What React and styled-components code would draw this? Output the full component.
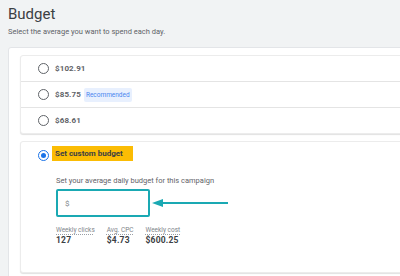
import React from "react";
import styled, { createGlobalStyle } from "styled-components";

const Global = createGlobalStyle`
  html, body { margin: 0; padding: 0; overflow: hidden; background: #f1f3f4; }
  body { font-family: Roboto, "Liberation Sans", Arial, sans-serif; }
  * { box-sizing: border-box; }
`;

const Page = styled.div`
  padding-left: 8px;
  width: 460px;
`;

const Title = styled.h1`
  margin: 0;
  padding-top: 4px;
  font-size: 15px;
  line-height: 20px;
  font-weight: 400;
  color: #3c4043;
`;

const Subtitle = styled.p`
  margin: 3px 0 0;
  font-size: 7.5px;
  line-height: 10px;
  color: #5f6368;
`;

const OuterCard = styled.section`
  margin-top: 10px;
  background: #fff;
  border: 1px solid #e3e5e8;
  border-radius: 3px;
  padding: 7px 0 24px 11px;
  display: flex;
  flex-direction: column;
  gap: 7px;
`;

const Card = styled.div`
  background: #fff;
  border: 1px solid #ececec;
  border-radius: 3px;
  box-shadow: 0 1px 1px rgba(0, 0, 0, 0.12);
`;

const OptionRow = styled.label`
  display: flex;
  align-items: center;
  height: ${(p) => (p.$first ? 25 : 26)}px;
  padding-left: 17px;
  gap: 6px;
  border-top: ${(p) => (p.$first ? "none" : "1px solid #e4e4e4")};
`;

const Radio = styled.span`
  width: 11px;
  height: 11px;
  border-radius: 50%;
  flex: none;
  border: 1.5px solid ${(p) => (p.$checked ? "#1a73e8" : "#5f6368")};
  display: flex;
  align-items: center;
  justify-content: center;
  margin-top: ${(p) => p.$offset || 0}px;
  &::after {
    content: "";
    width: 5px;
    height: 5px;
    border-radius: 50%;
    background: ${(p) => (p.$checked ? "#1a73e8" : "transparent")};
  }
`;

const Price = styled.span`
  font-size: 8px;
  font-weight: 700;
  color: #5f6368;
  letter-spacing: 0.1px;
`;

const Badge = styled.span`
  margin-left: -3px;
  background: #e8f0fe;
  color: #4a86f0;
  font-size: 6.5px;
  line-height: 14px;
  padding: 0 2px;
  border-radius: 2px;
`;

const CustomCard = styled(Card)`
  padding: 4px 0 27px 17px;
`;

const CustomHead = styled.div`
  display: flex;
  align-items: center;
  gap: 3px;
`;

const Highlight = styled.span`
  background: #fbbc04;
  color: #3c4043;
  font-size: 8px;
  font-weight: 700;
  line-height: 15px;
  padding: 0 3px 0 3px;
  width: 81px;
`;

const Body = styled.div`
  padding-left: 18px;
  display: flex;
  flex-direction: column;
`;

const Hint = styled.div`
  margin-top: 15px;
  font-size: 7.5px;
  line-height: 10px;
  color: #5f6368;
`;

const InputRow = styled.div`
  margin-top: 3px;
  display: flex;
  align-items: center;
  gap: 2px;
`;

const InputBox = styled.div`
  width: 94px;
  height: 28px;
  border: 2px solid #1aa9b3;
  border-radius: 2px;
  display: flex;
  align-items: center;
  padding-left: 7px;
  font-size: 8px;
  color: #80868b;
`;

const Stats = styled.div`
  margin-top: 8px;
  display: flex;
  gap: 12px;
`;

const Stat = styled.div`
  display: flex;
  flex-direction: column;
`;

const StatLabel = styled.span`
  font-size: 6.5px;
  line-height: 10px;
  color: #80868b;
  text-decoration: underline dotted #9aa0a6;
  text-underline-offset: 1.5px;
`;

const StatValue = styled.span`
  font-size: 8.5px;
  line-height: 10px;
  font-weight: 700;
  color: #3c4043;
  letter-spacing: 0.2px;
`;

const Arrow = () => (
  <svg width="77" height="10" viewBox="0 0 77 10">
    <line x1="8" y1="5" x2="76" y2="5" stroke="#1aa9b3" strokeWidth="2" />
    <polygon points="0,5 11,1 11,9" fill="#1aa9b3" />
  </svg>
);

const options = [
  { price: "$102.91" },
  { price: "$85.75", badge: "Recommended" },
  { price: "$68.61" },
];

const stats = [
  { label: "Weekly clicks", value: "127" },
  { label: "Avg. CPC", value: "$4.73" },
  { label: "Weekly cost", value: "$600.25" },
];

export default function App() {
  return (
    <>
      <Global />
      <Page>
        <Title>Budget</Title>
        <Subtitle>Select the average you want to spend each day.</Subtitle>
        <OuterCard>
          <Card>
            {options.map((o, i) => (
              <OptionRow key={o.price} $first={i === 0}>
                <Radio />
                <Price>{o.price}</Price>
                {o.badge && <Badge>{o.badge}</Badge>}
              </OptionRow>
            ))}
          </Card>
          <CustomCard>
            <CustomHead>
              <Radio $checked $offset={3} />
              <Highlight>Set custom budget</Highlight>
            </CustomHead>
            <Body>
              <Hint>Set your average daily budget for this campaign</Hint>
              <InputRow>
                <InputBox>$</InputBox>
                <Arrow />
              </InputRow>
              <Stats>
                {stats.map((s) => (
                  <Stat key={s.label}>
                    <StatLabel>{s.label}</StatLabel>
                    <StatValue>{s.value}</StatValue>
                  </Stat>
                ))}
              </Stats>
            </Body>
          </CustomCard>
        </OuterCard>
      </Page>
    </>
  );
}
